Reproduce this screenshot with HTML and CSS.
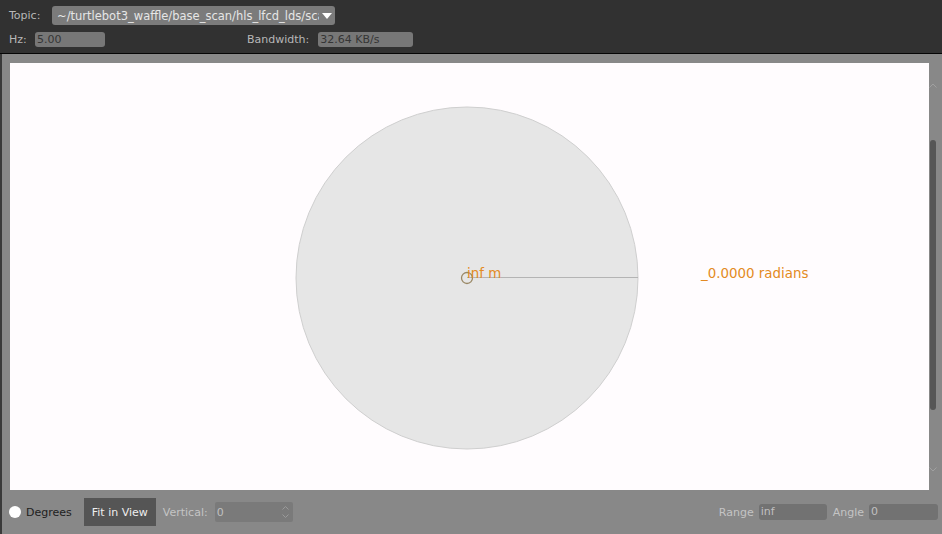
FILE: index.html
```html
<!DOCTYPE html>
<html>
<head>
<meta charset="utf-8">
<link rel="stylesheet" href="styles.css">
</head>
<body>
<div class="app">
  <header class="top">
    <div class="row row1">
      <span class="lbl">Topic:</span>
      <div class="combo">
        <span class="combo-text">~/turtlebot3_waffle/base_scan/hls_lfcd_lds/scan</span>
        <span class="combo-arrow">
          <svg width="10" height="6" viewBox="0 0 10 6"><path d="M0 0 L10 0 L5 6 Z" fill="#ffffff"/></svg>
        </span>
      </div>
    </div>
    <div class="row row2">
      <span class="lbl">Hz:</span>
      <div class="field hz">5.00</div>
      <span class="lbl bw-lbl">Bandwidth:</span>
      <div class="field bw">32.64 KB/s</div>
    </div>
  </header>
  <main class="middle">
    <div class="canvas">
      <svg width="919" height="427" viewBox="0 0 919 427">
        <circle cx="457" cy="215" r="171" fill="#e6e6e6" stroke="#cfcfcf" stroke-width="1"/>
        <line x1="457" y1="214.5" x2="628" y2="214.5" stroke="#b4b4b4" stroke-width="1"/>
        <circle cx="457" cy="215" r="5.5" fill="none" stroke="#9a8866" stroke-width="1.3"/>
        <text x="457" y="215" class="orange">inf m</text>
        <text x="691" y="215" class="orange">_0.0000 radians</text>
      </svg>
    </div>
    <div class="scrollbar">
      <svg class="chev up" width="8" height="5" viewBox="0 0 8 5"><path d="M0.5 4.5 L4 1 L7.5 4.5" fill="none" stroke="#a0a0a0" stroke-width="1"/></svg>
      <div class="thumb"></div>
      <svg class="chev down" width="8" height="5" viewBox="0 0 8 5"><path d="M0.5 0.5 L4 4 L7.5 0.5" fill="none" stroke="#a0a0a0" stroke-width="1"/></svg>
    </div>
  </main>
  <footer class="bottom">
    <div class="radio"></div>
    <span class="dark-lbl">Degrees</span>
    <button class="btn">Fit in View</button>
    <span class="dis-lbl">Vertical:</span>
    <div class="spin">
      <span>0</span>
      <span class="spin-arrows">
        <svg width="7" height="4" viewBox="0 0 7 4"><path d="M0.5 3.5 L3.5 0.5 L6.5 3.5" fill="none" stroke="#9a9a9a" stroke-width="1"/></svg>
        <svg width="7" height="4" viewBox="0 0 7 4"><path d="M0.5 0.5 L3.5 3.5 L6.5 0.5" fill="none" stroke="#9a9a9a" stroke-width="1"/></svg>
      </span>
    </div>
    <div class="spacer"></div>
    <span class="dis-lbl">Range</span>
    <div class="field range">inf</div>
    <span class="dis-lbl">Angle</span>
    <div class="field angle">0</div>
  </footer>
</div>
</body>
</html>
```
FILE: styles.css
```css
html, body {
  margin: 0;
  padding: 0;
}
body {
  width: 942px;
  height: 534px;
  overflow: hidden;
  font-family: "DejaVu Sans", "Liberation Sans", sans-serif;
  font-size: 11px;
  background: #888888;
}
.app {
  width: 942px;
  height: 534px;
  display: flex;
  flex-direction: column;
}
.top {
  background: #313131;
  border-bottom: 1px solid #050505;
  box-sizing: border-box;
  height: 54px;
  padding: 6px 0 0 9px;
  display: flex;
  flex-direction: column;
  gap: 7px;
}
.row {
  display: flex;
  align-items: center;
}
.lbl {
  color: #b8b8b8;
}
.row1 .lbl {
  width: 43px;
}
.combo {
  width: 283px;
  height: 19px;
  box-sizing: border-box;
  background: #7b7b7b;
  border-radius: 3px;
  display: flex;
  align-items: center;
  padding-left: 5px;
  overflow: hidden;
  position: relative;
}
.combo-text {
  color: #e6e6e6;
  white-space: nowrap;
  overflow: hidden;
  width: 262px;
  font-size: 11.5px;
}
.combo-arrow {
  position: absolute;
  right: 3px;
  top: 7px;
  display: flex;
}
.field {
  height: 15px;
  box-sizing: border-box;
  background: #777777;
  border-radius: 3px;
  color: #353535;
  padding-left: 2px;
  line-height: 15px;
}
.row2 .lbl {
  width: 26px;
}
.hz {
  width: 70px;
}
.row2 .bw-lbl {
  width: auto;
  margin-left: 142px;
  margin-right: 9px;
}
.bw {
  width: 95px;
}
.middle {
  flex: 1;
  display: flex;
  border-left: 2px solid #3a3a3a;
  padding: 9px 0 0 8px;
  box-sizing: border-box;
}
.canvas {
  width: 919px;
  height: 427px;
  background: #fffcfe;
}
.canvas svg {
  display: block;
}
.orange {
  fill: #e38a22;
  font-family: "DejaVu Sans", sans-serif;
  font-size: 13.4px;
}
.scrollbar {
  width: 13px;
  position: relative;
  margin-top: -9px;
  height: 436px;
}
.thumb {
  position: absolute;
  left: 1px;
  top: 86px;
  width: 6px;
  height: 270px;
  background: #565656;
  border-radius: 3px;
}
.chev {
  position: absolute;
  left: 0;
}
.chev.up {
  top: 29px;
}
.chev.down {
  top: 413px;
}
.bottom {
  height: 44px;
  display: flex;
  align-items: center;
  border-left: 2px solid #3a3a3a;
  box-sizing: border-box;
  padding-left: 7px;
}
.radio {
  width: 12px;
  height: 12px;
  border-radius: 50%;
  background: #ffffff;
  margin-right: 5px;
}
.dark-lbl {
  color: #1e1e1e;
  margin-right: 12px;
}
.btn {
  width: 72px;
  height: 28px;
  background: #555555;
  color: #eeeeee;
  border: none;
  font-family: inherit;
  font-size: 11px;
  padding: 0;
  margin-right: 7px;
}
.dis-lbl {
  color: #c4c4c4;
  margin-right: 5px;
}
.spin {
  width: 78px;
  height: 20px;
  background: #7a7a7a;
  border-radius: 2px;
  box-sizing: border-box;
  padding-left: 2px;
  color: #c0c0c0;
  display: flex;
  align-items: center;
  justify-content: space-between;
  margin-left: 2px;
}
.spin-arrows {
  display: flex;
  flex-direction: column;
  gap: 4px;
  padding-right: 4px;
}
.spin-arrows svg {
  display: block;
}
.spacer {
  flex: 1;
}
.range {
  width: 68px;
  height: 16px;
  line-height: 16px;
  background: #727272;
  color: #c0c0c0;
  margin-right: 6px;
}
.angle {
  width: 69px;
  height: 16px;
  line-height: 16px;
  background: #727272;
  color: #c0c0c0;
  margin-right: 4px;
}
```
